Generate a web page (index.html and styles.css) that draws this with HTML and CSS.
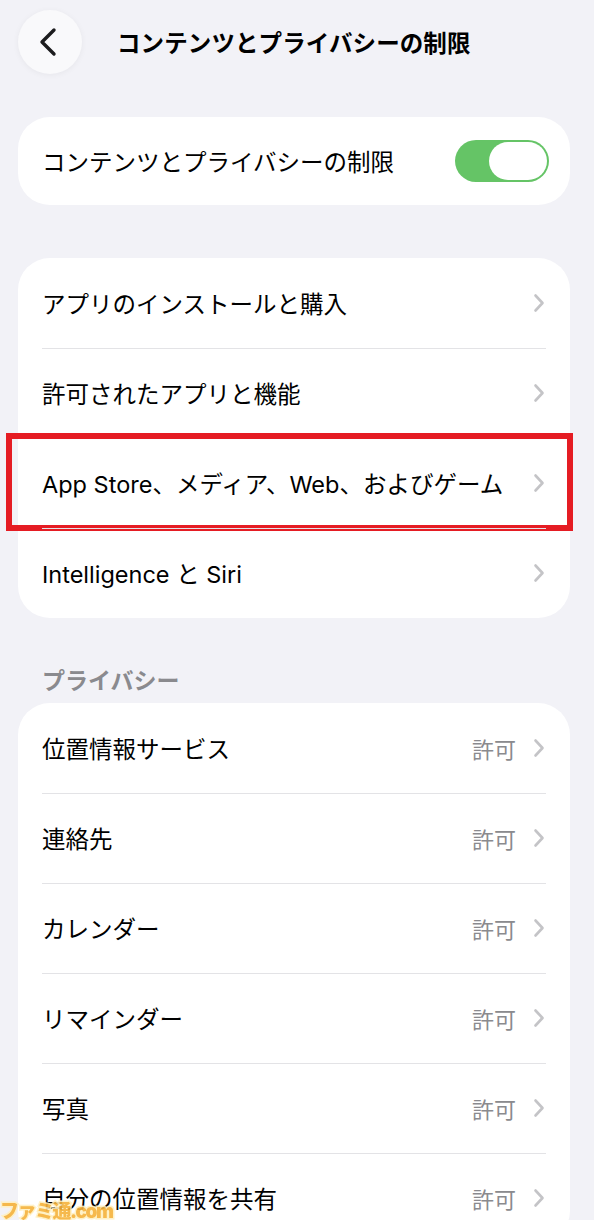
FILE: index.html
```html
<!DOCTYPE html>
<html lang="ja">
<head>
  <meta charset="UTF-8" />
  <meta name="viewport" content="width=device-width, initial-scale=1.0"/>
  <title>コンテンツとプライバシーの制限</title>
  <link rel="stylesheet" href="styles.css">
</head>
<body>
  <header class="nav">
    <button class="back-btn" aria-label="戻る">
      <svg width="22" height="30" viewBox="0 0 22 30">
        <path d="M17 3 L5 15 L17 27" fill="none" stroke="#1c1c1e" stroke-width="3.4" stroke-linecap="round" stroke-linejoin="round"/>
      </svg>
    </button>
    <h1 class="nav-title">コンテンツとプライバシーの制限</h1>
  </header>

  <main class="content">
    <section class="card card-toggle">
      <div class="row">
        <span class="label">コンテンツとプライバシーの制限</span>
        <span class="toggle"><span class="knob"></span></span>
      </div>
    </section>

    <section class="card">
      <div class="row">
        <span class="label">アプリのインストールと購入</span>
        <span class="chev"></span>
      </div>
      <div class="row">
        <span class="label">許可されたアプリと機能</span>
        <span class="chev"></span>
      </div>
      <div class="row highlighted">
        <span class="label">App Store、メディア、Web、およびゲーム</span>
        <span class="chev"></span>
        <span class="red-box"></span>
      </div>
      <div class="row">
        <span class="label">Intelligence と Siri</span>
        <span class="chev"></span>
      </div>
    </section>

    <h2 class="section-title">プライバシー</h2>
    <section class="card">
      <div class="row">
        <span class="label">位置情報サービス</span>
        <span class="value">許可</span>
        <span class="chev"></span>
      </div>
      <div class="row">
        <span class="label">連絡先</span>
        <span class="value">許可</span>
        <span class="chev"></span>
      </div>
      <div class="row">
        <span class="label">カレンダー</span>
        <span class="value">許可</span>
        <span class="chev"></span>
      </div>
      <div class="row">
        <span class="label">リマインダー</span>
        <span class="value">許可</span>
        <span class="chev"></span>
      </div>
      <div class="row">
        <span class="label">写真</span>
        <span class="value">許可</span>
        <span class="chev"></span>
      </div>
      <div class="row">
        <span class="label">自分の位置情報を共有</span>
        <span class="value">許可</span>
        <span class="chev"></span>
      </div>
    </section>
  </main>

  <div class="watermark">ファミ通.com</div>
</body>
</html>
```

FILE: styles.css
```css
:root {
  --bg: #f2f2f7;
  --card: #ffffff;
  --text: #000000;
  --muted: #8a8a8e;
  --chev: #c4c4c7;
  --sep: #e3e3e6;
  --green: #65c466;
}

body {
  margin: 0;
  background: var(--bg);
  color: var(--text);
  font-family: Inter, "Noto Sans CJK JP", sans-serif;
}

.nav {
  display: flex;
  align-items: center;
  height: 64px;
  padding: 10px 18px 0;
}

.back-btn {
  width: 64px;
  height: 64px;
  border: none;
  border-radius: 50%;
  background: #f9f9fb;
  box-shadow: 0 1px 6px rgba(0,0,0,0.05);
  display: flex;
  align-items: center;
  justify-content: center;
  padding: 0 4px 0 0;
}

.nav-title {
  margin: 0 0 0 35px;
  font-size: 23.5px;
  font-weight: 700;
  letter-spacing: 0.1px;
}

.content {
  padding: 43px 24px 0 18px;
}

.card {
  background: var(--card);
  border-radius: 32px;
  margin-bottom: 53px;
}

.row {
  position: relative;
  display: flex;
  align-items: center;
  height: 90px;
  padding: 0 25px 0 24px;
}

.row + .row::before {
  content: "";
  position: absolute;
  top: 0;
  left: 24px;
  right: 24px;
  height: 1px;
  background: var(--sep);
}

.card-toggle .row {
  height: 88px;
  padding-right: 21px;
}

.label {
  flex: 1;
  font-size: 23.5px;
  white-space: nowrap;
}

.value {
  font-size: 22px;
  color: var(--muted);
  margin-right: 17px;
}

.chev {
  width: 12px;
  height: 20px;
  background: no-repeat center/12px 20px url("data:image/svg+xml,%3Csvg xmlns='http://www.w3.org/2000/svg' width='12' height='20' viewBox='0 0 12 20'%3E%3Cpath d='M2.5 2.5 L9.5 10 L2.5 17.5' fill='none' stroke='%23c4c4c7' stroke-width='2.6' stroke-linecap='round' stroke-linejoin='round'/%3E%3C/svg%3E");
}

.toggle {
  width: 94px;
  height: 42px;
  border-radius: 21px;
  background: var(--green);
  display: flex;
  align-items: center;
  justify-content: flex-end;
  padding: 0 2px;
  box-sizing: border-box;
}

.knob {
  width: 58px;
  height: 38px;
  border-radius: 19px;
  background: #fff;
}

.red-box {
  position: absolute;
  left: -12px;
  right: -3px;
  top: -5px;
  bottom: -3px;
  border: 6px solid #e51c23;
}

.section-title {
  margin: -8px 0 3px 24px;
  font-size: 23px;
  font-weight: 600;
  color: var(--muted);
  line-height: 37px;
}

.watermark {
  position: fixed;
  left: 0;
  bottom: -3px;
  font-size: 19px;
  font-weight: 900;
  color: #f5b23a;
  letter-spacing: -1.5px;
  -webkit-text-stroke: 3px #fff0c0;
  paint-order: stroke fill;
  opacity: 0.9;
}
```
